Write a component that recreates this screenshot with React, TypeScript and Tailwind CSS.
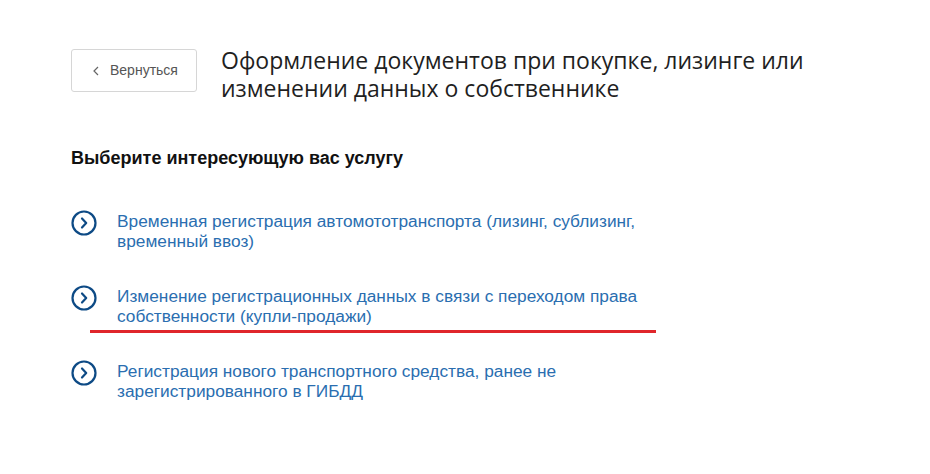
import React from 'react';

const services = [
  'Временная регистрация автомототранспорта (лизинг, сублизинг, временный ввоз)',
  'Изменение регистрационных данных в связи с переходом права собственности (купли-продажи)',
  'Регистрация нового транспортного средства, ранее не зарегистрированного в ГИБДД',
];

const ArrowCircle: React.FC = () => (
  <svg width="26" height="26" viewBox="0 0 26 26" className="shrink-0">
    <circle cx="13" cy="13" r="11.5" fill="none" stroke="#0d4a85" strokeWidth="2.2" />
    <path d="M11 8.5 L15.2 13 L11 17.5" fill="none" stroke="#0d4a85" strokeWidth="2.2" strokeLinecap="round" strokeLinejoin="round" />
  </svg>
);

const App: React.FC = () => {
  return (
    <div className="relative w-[930px] h-[474px] bg-white font-['Liberation_Sans',Arial,sans-serif]">
      <div className="pl-[71px] pt-[47px]">
        <div className="flex items-start gap-[24px]">
          <button className="mt-[2px] flex items-center gap-[10px] w-[126px] h-[43px] pl-[20px] border border-[#d6d6d6] rounded-[3px] text-[14px] text-[#555] bg-white">
            <svg width="8" height="12" viewBox="0 0 8 12">
              <path d="M6 2 L2 6 L6 10" fill="none" stroke="#666" strokeWidth="1.2" />
            </svg>
            Вернуться
          </button>
          <h1 className="-mt-[1px] font-['Open_Sans',sans-serif] text-[23px] leading-[28px] text-[#1f1f1f] w-[620px]">
            Оформление документов при покупке, лизинге или изменении данных о собственнике
          </h1>
        </div>

        <h2 className="mt-[45px] text-[18px] font-bold text-[#111] leading-[22px]">
          Выберите интересующую вас услугу
        </h2>

        <div className="mt-[43px] flex flex-col gap-[36px]">
          {services.map((s) => (
            <a key={s} className="flex items-start gap-[20px] cursor-pointer">
              <div className="-mt-[2px]">
                <ArrowCircle />
              </div>
              <span className="text-[17.3px] leading-[19.5px] text-[#2a6eb0] w-[540px]">{s}</span>
            </a>
          ))}
        </div>
      </div>

      {/* red annotation line */}
      <div className="absolute left-[90px] top-[330px] w-[566px] h-[3px] bg-[#e0262b]" />
    </div>
  );
};

export default App;
